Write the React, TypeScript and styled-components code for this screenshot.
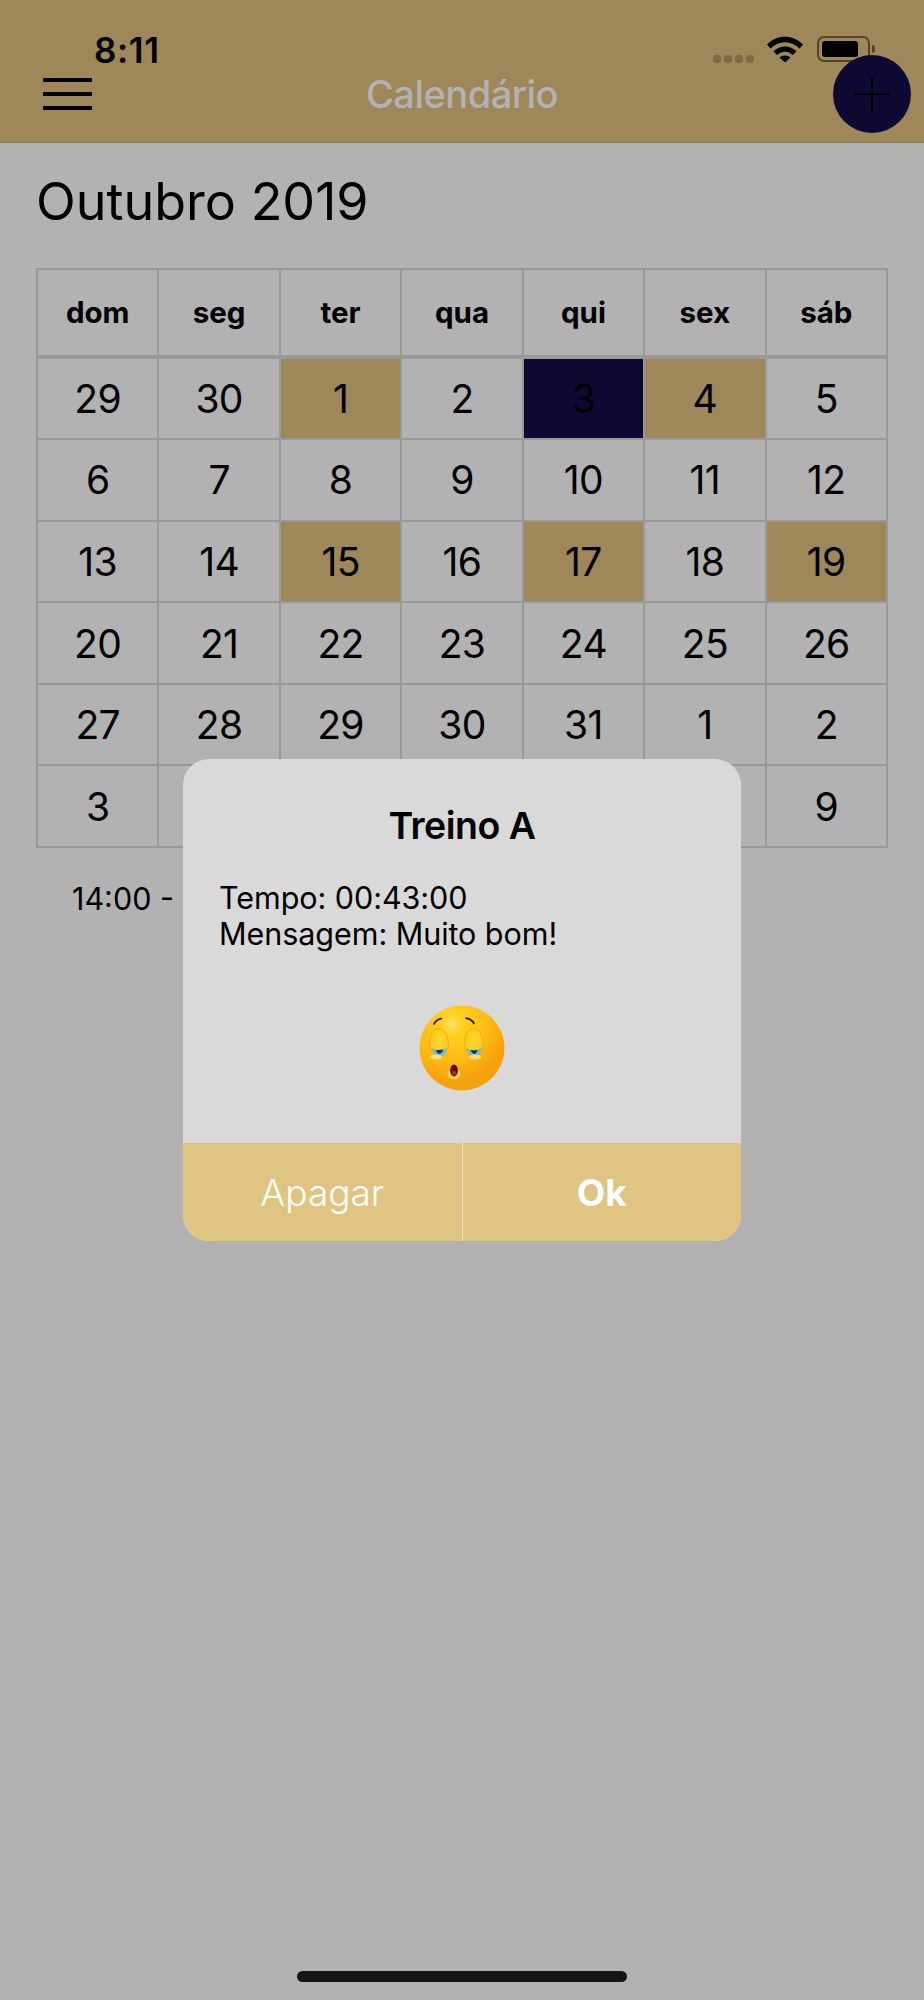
import React from 'react'
import styled, { createGlobalStyle } from 'styled-components'

const GlobalStyle = createGlobalStyle`
  html, body {
    margin: 0;
    padding: 0;
    background: #fff;
  }
  body {
    font-family: Inter, "Liberation Sans", sans-serif;
    color: #000;
  }
`

const Page = styled.div`
  position: relative;
  width: 924px;
  height: 2000px;
  overflow: hidden;
  background: #fff;
`

const Header = styled.header`
  height: 142px;
  background: #e2c27f;
  border-bottom: 1px solid #c9ad71;
`

const StatusBar = styled.div`
  display: flex;
  align-items: flex-start;
  justify-content: space-between;
  height: 68px;
  margin-bottom: -13px;
  padding: 30px 54px 0 94px;
  box-sizing: border-box;
`

const Clock = styled.span`
  font-size: 35px;
  line-height: 40px;
  font-weight: 600;
  letter-spacing: 0.6px;
`

const StatusIcons = styled.div`
  display: flex;
  align-items: flex-start;
  padding-top: 6px;
`

const SignalDots = styled.div`
  display: flex;
  gap: 3px;
  margin: 19px 13px 0 0;
`

const SignalDot = styled.span`
  width: 8px;
  height: 8px;
  border-radius: 3px;
  background: #b49a65;
`

const Wifi = styled.svg`
  width: 36px;
  height: 26px;
  margin-right: 14px;
`

const Battery = styled.div`
  position: relative;
  width: 53px;
  height: 26px;
  box-sizing: border-box;
  padding: 3px;
  border: 2px solid #77623a;
  border-radius: 7px;

  &::after {
    content: '';
    position: absolute;
    right: -7px;
    top: 7px;
    width: 3px;
    height: 8px;
    border-radius: 0 3px 3px 0;
    background: #77623a;
  }
`

const BatteryFill = styled.div`
  width: 36px;
  height: 100%;
  border-radius: 3px;
  background: #000;
`

const NavBar = styled.nav`
  display: grid;
  grid-template-columns: 1fr auto 1fr;
  align-items: center;
  height: 52px;
  padding: 0 13px 0 43px;
`

const MenuButton = styled.div`
  display: flex;
  flex-direction: column;
  gap: 10px;
  width: 49px;
`

const MenuLine = styled.span`
  height: 4px;
  border-radius: 1px;
  background: #000;
`

const Title = styled.h1`
  margin: 0;
  transform: translateX(-15px);
  font-size: 38px;
  line-height: 44px;
  font-weight: 500;
  letter-spacing: -0.5px;
  color: #fff;
`

const AddButton = styled.div`
  position: relative;
  justify-self: end;
  display: flex;
  align-items: center;
  justify-content: center;
  width: 78px;
  height: 78px;
  border-radius: 50%;
  background: #150e49;
`

const Content = styled.main`
  padding: 0 36px;
`

const Month = styled.h2`
  margin: 0;
  padding-top: 29px;
  height: 125px;
  box-sizing: border-box;
  font-size: 52px;
  line-height: 60px;
  font-weight: 400;
`

const Calendar = styled.div`
  display: grid;
  grid-template-columns: repeat(7, 1fr);
  grid-template-rows: 86.500px repeat(6, 79.600px);
  gap: 2px;
  padding: 2px;
  background: #dcdcdc;
`

const WeekDay = styled.div`
  display: flex;
  align-items: center;
  justify-content: center;
  margin-bottom: 2px;
  background: #fff;
  font-size: 29.500px;
  font-weight: 700;
`

const Day = styled.div<{ $tone?: 'accent' | 'today' }>`
  display: flex;
  align-items: center;
  justify-content: center;
  background: ${(p) => (p.$tone === 'today' ? '#150e49' : p.$tone === 'accent' ? '#e2c27f' : '#fff')};
  font-size: 39px;
  letter-spacing: -0.6px;
`

const Session = styled.p`
  margin: 33px 0 0 36px;
  font-size: 30.500px;
  line-height: 36px;
`

const Overlay = styled.div`
  position: absolute;
  inset: 0;
  display: flex;
  align-items: center;
  justify-content: center;
  background: rgba(0, 0, 0, 0.3);
`

const Modal = styled.div`
  display: flex;
  flex-direction: column;
  width: 558px;
  height: 482px;
  border-radius: 26px;
  overflow: hidden;
  background: #d9d9d9;
`

const ModalBody = styled.div`
  flex: 1;
  display: flex;
  flex-direction: column;
  padding: 0 36px;
`

const ModalTitle = styled.h3`
  margin: 45px 0 0;
  font-size: 37.500px;
  line-height: 44px;
  font-weight: 600;
  letter-spacing: -0.5px;
  text-align: center;
`

const ModalText = styled.div`
  margin-top: 32px;
  font-size: 30.500px;
  line-height: 36px;
  letter-spacing: -0.05px;
`

const EmojiWrap = styled.div`
  display: flex;
  justify-content: center;
  margin-top: 53px;
`

const ModalActions = styled.div`
  display: grid;
  grid-template-columns: 1fr 1px 1fr;
  height: 98px;
  background: #e0c482;
`

const ActionDivider = styled.span`
  background: #efe2c2;
`

const Action = styled.button<{ $strong?: boolean }>`
  border: 0;
  padding: 0;
  background: transparent;
  color: #fff;
  font-family: inherit;
  font-size: 37px;
  font-weight: ${(p) => (p.$strong ? 700 : 300)};
`

const HomeIndicator = styled.div`
  position: absolute;
  left: 297px;
  bottom: 18px;
  width: 330px;
  height: 11px;
  border-radius: 6px;
  background: #151515;
`

const weekDays = ['dom', 'seg', 'ter', 'qua', 'qui', 'sex', 'sáb']
// the last row's middle days sit behind the dialog
const days = [
  29, 30, 1, 2, 3, 4, 5, 6, 7, 8, 9, 10, 11, 12, 13, 14, 15, 16, 17, 18, 19, 20, 21, 22, 23, 24, 25, 26, 27, 28, 29, 30,
  31, 1, 2, 3, '', '', '', '', '', 9,
]
const accentCells = [2, 5, 16, 18, 20]
const todayCell = 4

const PlusIcon = () => (
  <svg width="36" height="36" viewBox="0 0 36 36">
    <path d="M0 18H36M18 0V36" stroke="#000" strokeWidth="2" />
  </svg>
)

const WifiIcon = () => (
  <Wifi viewBox="0 0 36 26">
    <path d="M0 8.500C10-2 26-2 36 8.500L32.500 12.500C24 4 12 4 3.500 12.500Z" fill="#000" />
    <path d="M6.500 15.200C13 8.800 23 8.800 29.500 15.200L26 19C21 14.500 15 14.500 10 19Z" fill="#000" />
    <path d="M12.500 21.500C15.500 18.800 20.500 18.800 23.500 21.500L18 26.500Z" fill="#000" />
  </Wifi>
)

const TiredFace = () => (
  <svg width="86" height="86" viewBox="0 0 86 86">
    <defs>
      <radialGradient id="face" cx="38%" cy="22%" r="82%">
        <stop offset="0" stopColor="#ffe27a" />
        <stop offset="0.14" stopColor="#ffd21f" />
        <stop offset="0.55" stopColor="#fdb913" />
        <stop offset="0.82" stopColor="#f7a00b" />
        <stop offset="1" stopColor="#f2a60d" />
      </radialGradient>
      <radialGradient id="lid" cx="50%" cy="45%" r="60%">
        <stop offset="0" stopColor="#ffd92c" />
        <stop offset="1" stopColor="#fcc21a" />
      </radialGradient>
    </defs>
    <circle cx="43" cy="43" r="42.500" fill="url(#face)" />
    <ellipse cx="20" cy="38" rx="9.500" ry="14.500" fill="url(#lid)" stroke="#eba615" strokeWidth="0.8" />
    <ellipse cx="55" cy="38" rx="9.500" ry="14.500" fill="url(#lid)" stroke="#eba615" strokeWidth="0.8" />
    <path d="M12.500 43C15 45.500 22 46 27.500 43C27 49 23.500 52 20 51.500C16.500 51.500 13.500 48 12.500 43Z" fill="#62bce4" />
    <path d="M17 44.800C19 45.300 22 45.200 24 44.300C23.500 47 22 49 20.500 49C18.500 49 17.500 47 17 44.800Z" fill="#17364a" />
    <path d="M47.500 43C50 46 57 46 62.500 43C62 49 59 52 55.500 51.500C52 51.500 48.500 48 47.500 43Z" fill="#62bce4" />
    <path d="M51.500 44.800C54 45.600 56.500 45.500 58.500 44.800C58 47 57 49 55.500 49C53.500 49 52.500 47 51.500 44.800Z" fill="#17364a" />
    <ellipse cx="17" cy="52" rx="6" ry="2.500" fill="#ffe98a" opacity="0.8" />
    <ellipse cx="56" cy="52" rx="6" ry="2.500" fill="#ffe98a" opacity="0.8" />
    <path d="M14 19C16 15 19 13 23 12.500C23.500 13.500 23 14.500 22.500 14.500C19.500 15 17 16.500 15.500 20Z" fill="#2b1a05" />
    <path d="M46 12.500C50 12 53.500 14 56 18L54.500 19.500C53 16.500 50.500 14.500 46.500 14Z" fill="#2b1a05" />
    <ellipse cx="35" cy="69.500" rx="6.500" ry="5" fill="#ffe05a" opacity="0.8" />
    <ellipse cx="35" cy="65.500" rx="3.800" ry="6" fill="#5c0a12" />
    <ellipse cx="35" cy="68" rx="2.200" ry="2.600" fill="#b3242a" />
  </svg>
)

const App = () => {
  return (
    <Page>
      <GlobalStyle />
      <Header>
        <StatusBar>
          <Clock>8:11</Clock>
          <StatusIcons>
            <SignalDots>
              <SignalDot />
              <SignalDot />
              <SignalDot />
              <SignalDot />
            </SignalDots>
            <WifiIcon />
            <Battery>
              <BatteryFill />
            </Battery>
          </StatusIcons>
        </StatusBar>
        <NavBar>
          <MenuButton>
            <MenuLine />
            <MenuLine />
            <MenuLine />
          </MenuButton>
          <Title>Calendário</Title>
          <AddButton>
            <PlusIcon />
          </AddButton>
        </NavBar>
      </Header>
      <Content>
        <Month>Outubro 2019</Month>
        <Calendar>
          {weekDays.map((d) => (
            <WeekDay key={d}>{d}</WeekDay>
          ))}
          {days.map((d, i) => (
            <Day key={i} $tone={i === todayCell ? 'today' : accentCells.includes(i) ? 'accent' : undefined}>
              {d}
            </Day>
          ))}
        </Calendar>
        <Session>14:00 -</Session>
      </Content>
      <Overlay>
        <Modal>
          <ModalBody>
            <ModalTitle>Treino A</ModalTitle>
            <ModalText>
              Tempo: 00:43:00
              <br />
              Mensagem: Muito bom!
            </ModalText>
            <EmojiWrap>
              <TiredFace />
            </EmojiWrap>
          </ModalBody>
          <ModalActions>
            <Action>Apagar</Action>
            <ActionDivider />
            <Action $strong>Ok</Action>
          </ModalActions>
        </Modal>
        <HomeIndicator />
      </Overlay>
    </Page>
  )
}

export default App
